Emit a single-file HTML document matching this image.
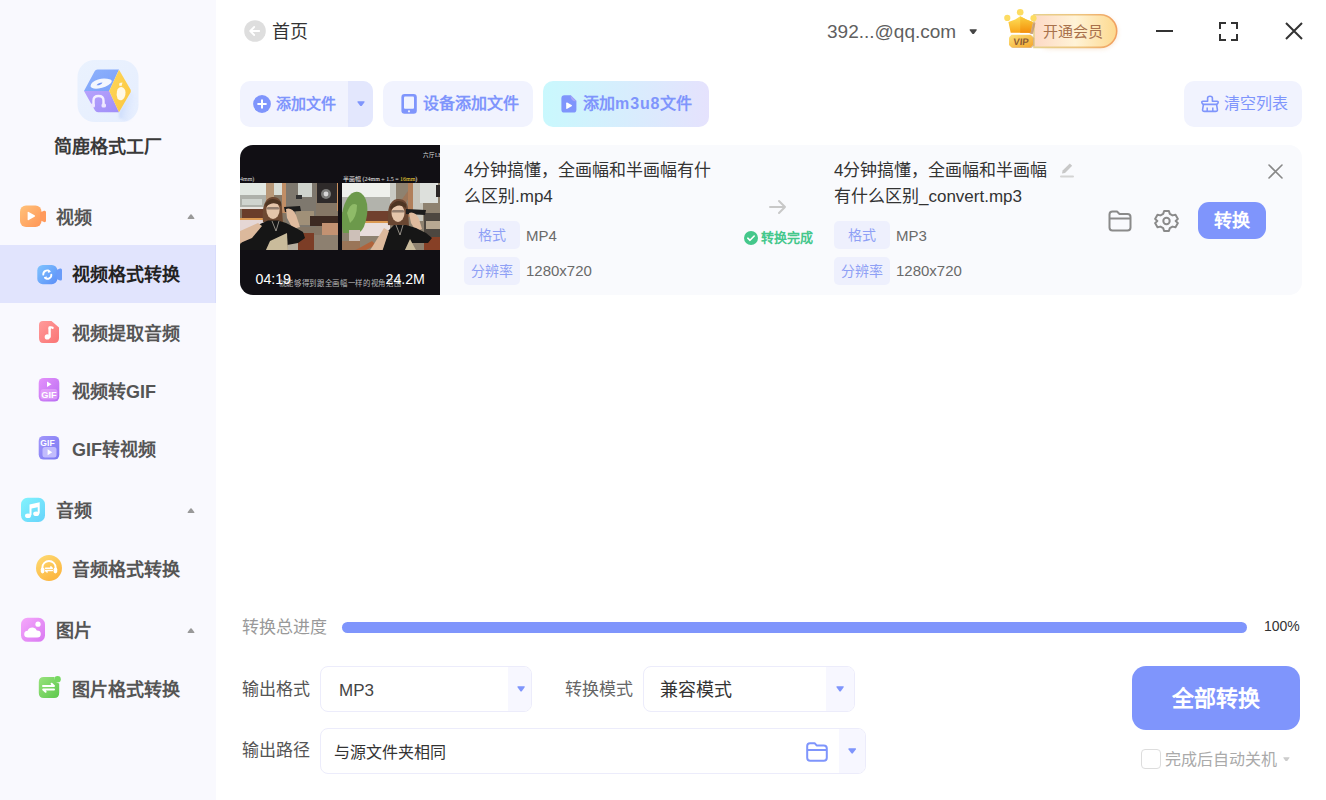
<!DOCTYPE html>
<html lang="zh-CN"><head><meta charset="utf-8">
<style>
*{margin:0;padding:0;box-sizing:border-box}
html,body{width:1326px;height:800px;overflow:hidden;background:#fff;font-family:"Liberation Sans",sans-serif;color:#333}
.a{position:absolute}
.t{position:absolute;white-space:nowrap;line-height:1}
#side{position:absolute;left:0;top:0;width:216px;height:800px;background:#f9f9fe}
.hdr{font-size:18px;font-weight:bold;color:#555}
.sub{font-size:18px;font-weight:bold;color:#555}
.caret{position:absolute;width:0;height:0;border-left:4px solid transparent;border-right:4px solid transparent;border-bottom:5px solid #999}
.btn{position:absolute;top:81px;height:46px;border-radius:10px;background:#f1f3fe}
.btxt{font-size:16px;font-weight:bold;color:#7f95fc}
.tag{position:absolute;width:56px;height:28px;border-radius:5px;background:#eef0fd;color:#8fa0f5;font-size:14px;line-height:28px;text-align:center}
.val{font-size:15px;color:#6a6a6a}
.sel{position:absolute;border:1px solid #ececfb;border-radius:8px;background:#fff;overflow:hidden}
.selr{position:absolute;right:0;top:0;bottom:0;width:23px;background:#f7f7ff}
.bcaret{position:absolute;width:0;height:0;border-left:4px solid transparent;border-right:4px solid transparent;border-top:5px solid #7f95fc}
</style></head><body>
<div id="side">
  <!-- logo -->
    <svg class="a" style="left:77px;top:60px" width="62" height="62" viewBox="0 0 62 62">
    <defs>
      <linearGradient id="lbg" x1="0" y1="0" x2="1" y2="1"><stop offset="0" stop-color="#eaf2fe"/><stop offset="1" stop-color="#e6eefe"/></linearGradient>
      <linearGradient id="lsh" x1="0" y1="0" x2="1" y2="0.3"><stop offset="0" stop-color="#a4bffa" stop-opacity="0.9"/><stop offset="1" stop-color="#e0ebfe" stop-opacity="0"/></linearGradient><filter id="lblur"><feGaussianBlur stdDeviation="1.2"/></filter>
      <linearGradient id="lbl" x1="0" y1="0" x2="1" y2="1"><stop offset="0" stop-color="#8eb2fc"/><stop offset="1" stop-color="#7aa0fa"/></linearGradient>
      <linearGradient id="lpu" x1="0" y1="0" x2="1" y2="1"><stop offset="0" stop-color="#b7a2fc"/><stop offset="1" stop-color="#a08ef8"/></linearGradient>
      <linearGradient id="lye" x1="0" y1="0" x2="1" y2="1"><stop offset="0" stop-color="#fdd65a"/><stop offset="1" stop-color="#fcc63e"/></linearGradient>
    </defs>
    <rect x="0.5" y="0" width="61" height="62" rx="17" fill="url(#lbg)"/>
    <path d="M42 52.3L53.8 31.5L61.5 40V52Q59 60 50 61.5L42 58Z" fill="url(#lsh)" opacity="0.7" filter="url(#lblur)"/>
    <path d="M17.5 11.5Q18.5 9.5 20.5 9.5H42L32.2 31H7Z" fill="url(#lbl)"/>
    <path d="M7 31H32.2L42 52.3H21Q19 52.3 18 50.5Z" fill="url(#lpu)"/>
    <path d="M42 9.8L53.5 29.5Q54.3 31 53.5 32.5L42 52.3L32.2 31Z" fill="url(#lye)"/>
    <path d="M13.5 26.3Q14 21.5 21 19.5Q27 17.5 33.5 19.5Q36 21 33.5 23.5Q29 27.5 21.5 28.5Q14.5 29.2 13.5 26.3Z" fill="#f3f6fe"/>
    <path d="M19.5 25.3Q21.5 22.5 25.5 22.5Q24 25.5 19.5 25.3Z" fill="#6f95f8"/>
    <path d="M16.5 45.5V40.5Q16.5 36 21.5 36Q26.5 36 26.5 40.5V45.5" fill="none" stroke="#f4efff" stroke-width="2.4"/>
    <rect x="13.5" y="43.5" width="4.5" height="4" rx="1.5" fill="#ede6ff"/>
    <rect x="24.5" y="43.5" width="4.5" height="4" rx="1.5" fill="#ede6ff"/>
    <path d="M44.5 27Q48.5 28 48.5 32.5Q48.5 38 45 40Q42 41 40.5 38.5Q39 35 40 31Q41 27 44.5 27Z" fill="#fff8e4"/>
    <path d="M42.5 23L45.5 22.5L44.5 26L42 25.5Z" fill="#fff8e4"/>
  </svg>
  <div class="t" style="left:54px;top:138px;font-size:18px;font-weight:bold;color:#3a3a3a">简鹿格式工厂</div>

  <!-- video section -->
  <svg class="a" style="left:19px;top:205px" width="28" height="23" viewBox="0 0 28 23">
    <defs><linearGradient id="gOr" x1="0" y1="0" x2="1" y2="1"><stop offset="0" stop-color="#ffc27a"/><stop offset="1" stop-color="#ff9556"/></linearGradient></defs>
    <rect x="1" y="0.6" width="21.5" height="21.5" rx="6" fill="url(#gOr)"/>
    <path d="M21 7.5L25 5.8Q27 5.2 27 7.2V15.6Q27 17.6 25 17L21 15.2Z" fill="#ff9a5c"/>
    <path d="M8.6 7.6Q8.6 6.4 9.7 7L15.6 10.3Q16.6 11 15.6 11.7L9.7 15Q8.6 15.6 8.6 14.4Z" fill="#fff"/>
  </svg>
  <div class="t hdr" style="left:56px;top:209px">视频</div>
  <svg class="a" style="left:187px;top:213.5px" width="8" height="5.2" viewBox="0 0 8 5.6"><path d="M1 5.3H7Q8.2 5.3 7.5 4.3L4.7 0.6Q4 -0.2 3.3 0.6L0.5 4.3Q-0.2 5.3 1 5.3Z" fill="#999"/></svg>

  <div class="a" style="left:0;top:245px;width:216px;height:58px;background:#e1e4fd;border-right:1px solid #d9ddfc"></div>
  <svg class="a" style="left:37px;top:264px" width="26" height="21" viewBox="0 0 26 21">
    <defs><linearGradient id="gBl" x1="0" y1="0" x2="1" y2="1"><stop offset="0" stop-color="#7fc4fe"/><stop offset="1" stop-color="#5b8ef8"/></linearGradient></defs>
    <rect x="0.3" y="1" width="20" height="19.2" rx="5.5" fill="url(#gBl)"/>
    <path d="M19.5 6L23 4.6Q25 4 25 6V15Q25 17 23 16.4L19.5 15Z" fill="#6a9cf9"/>
    <path d="M6.3 10.6A3.8 3.8 0 0 1 12.6 7.4M14.3 10.6A3.8 3.8 0 0 1 8 13.8" fill="none" stroke="#fff" stroke-width="1.9" stroke-linecap="round"/>
    <path d="M11.2 5.6L13.6 7.6L10.9 8.9Z M9.4 15.6L7 13.6L9.7 12.3Z" fill="#fff"/>
  </svg>
  <div class="t sub" style="left:72px;top:266px;color:#222">视频格式转换</div>

  <svg class="a" style="left:38px;top:320px" width="22" height="24" viewBox="0 0 22 24">
    <defs><linearGradient id="gRd" x1="0" y1="0" x2="1" y2="1"><stop offset="0" stop-color="#ff9b9b"/><stop offset="1" stop-color="#fa7474"/></linearGradient></defs>
    <path d="M5 1H13.5L21 7.6V18Q21 23 16 23H5Q1 23 1 18V5Q1 1 5 1Z" fill="url(#gRd)"/>
    <path d="M11.6 7.5V16.8" stroke="#fff" stroke-width="2.4" stroke-linecap="round"/>
    <circle cx="9.3" cy="16.9" r="2.6" fill="#fff"/>
    <path d="M11.6 8.6Q12.4 6.4 14.6 7.8" fill="none" stroke="#fff" stroke-width="2.2" stroke-linecap="round"/>
  </svg>
  <div class="t sub" style="left:72px;top:325px">视频提取音频</div>

  <svg class="a" style="left:38px;top:377px" width="22" height="25" viewBox="0 0 22 25">
    <defs><linearGradient id="gPu" x1="0" y1="0" x2="1" y2="1"><stop offset="0" stop-color="#e592fb"/><stop offset="1" stop-color="#b86cf2"/></linearGradient></defs>
    <rect x="0.7" y="0.9" width="20.6" height="23.7" rx="5" fill="url(#gPu)"/>
    <rect x="2.5" y="12" width="17" height="10.5" rx="3" fill="#ecb2fb" opacity="0.55"/>
    <path d="M9 4.5L13.5 7.2L9 9.9Z" fill="#fff"/>
    <text x="11" y="21.2" text-anchor="middle" font-family="Liberation Sans" font-weight="bold" font-size="9.2" fill="#fff">GIF</text>
  </svg>
  <div class="t sub" style="left:72px;top:383px">视频转GIF</div>

  <svg class="a" style="left:38px;top:435px" width="22" height="25" viewBox="0 0 22 25">
    <defs><linearGradient id="gVi" x1="0" y1="0" x2="1" y2="1"><stop offset="0" stop-color="#a397fb"/><stop offset="1" stop-color="#7a78f2"/></linearGradient></defs>
    <rect x="0.7" y="0.9" width="20.6" height="23.7" rx="5" fill="url(#gVi)"/>
    <text x="9.5" y="10.8" text-anchor="middle" font-family="Liberation Sans" font-weight="bold" font-size="8.6" fill="#fff">GIF</text>
    <rect x="4.5" y="12" width="14" height="10.5" rx="2.5" fill="#c2bcfd"/>
    <path d="M9.6 14.2L14.2 17.2L9.6 20.2Z" fill="#fff"/>
  </svg>
  <div class="t sub" style="left:72px;top:441px">GIF转视频</div>

  <!-- audio -->
  <svg class="a" style="left:21px;top:497px" width="25" height="26" viewBox="0 0 25 26">
    <defs><linearGradient id="gCy" x1="0" y1="0" x2="1" y2="1"><stop offset="0" stop-color="#82f3fd"/><stop offset="1" stop-color="#66d3fb"/></linearGradient></defs>
    <rect x="0" y="0.8" width="24" height="24.2" rx="6.5" fill="url(#gCy)"/>
    <path d="M9.5 18.3V8.4L17.7 6.6V16.4" fill="none" stroke="#fff" stroke-width="2"/>
    <path d="M9.5 8.4L17.7 6.6V10L9.5 11.8Z" fill="#fff"/>
    <ellipse cx="7" cy="18.8" rx="3" ry="2.3" fill="#fff"/>
    <ellipse cx="15.2" cy="16.8" rx="3" ry="2.3" fill="#fff"/>
  </svg>
  <div class="t hdr" style="left:56px;top:502px">音频</div>
  <svg class="a" style="left:187px;top:507.5px" width="8" height="5.2" viewBox="0 0 8 5.6"><path d="M1 5.3H7Q8.2 5.3 7.5 4.3L4.7 0.6Q4 -0.2 3.3 0.6L0.5 4.3Q-0.2 5.3 1 5.3Z" fill="#999"/></svg>
  <svg class="a" style="left:36px;top:555px" width="26" height="26" viewBox="0 0 26 26">
    <defs><linearGradient id="gYe" x1="0" y1="0" x2="0.6" y2="1"><stop offset="0" stop-color="#fedc75"/><stop offset="1" stop-color="#fcb640"/></linearGradient></defs>
    <circle cx="13" cy="13" r="13" fill="url(#gYe)"/>
    <path d="M6.4 15.2V12.6A6.6 6.6 0 0 1 19.6 12.6V15.2" fill="none" stroke="#fff" stroke-width="1.9"/>
    <rect x="4.8" y="12.4" width="3.6" height="6" rx="1.8" fill="#fff"/>
    <rect x="17.6" y="12.4" width="3.6" height="6" rx="1.8" fill="#fff"/>
    <path d="M9.5 13.3H16.3L14.8 11.9M16.3 15.6H9.6L11.1 17" fill="none" stroke="#fff" stroke-width="1.5" stroke-linecap="round" stroke-linejoin="round"/>
  </svg>
  <div class="t sub" style="left:72px;top:561px">音频格式转换</div>

  <!-- image -->
  <svg class="a" style="left:21px;top:617px" width="25" height="26" viewBox="0 0 25 26">
    <defs><linearGradient id="gPk" x1="0" y1="0" x2="1" y2="1"><stop offset="0" stop-color="#f5a8fb"/><stop offset="1" stop-color="#d978f2"/></linearGradient></defs>
    <rect x="0" y="0.8" width="24" height="24" rx="6.5" fill="url(#gPk)"/>
    <circle cx="17" cy="7.2" r="2.6" fill="#fff"/>
    <path d="M7 20.5Q3.2 20.5 3.2 17.2Q3.2 14 6.6 13.8Q8 10.2 12 10.6Q15 11 15.8 13.6Q19.8 13.6 19.8 17Q19.8 20.5 16.2 20.5Z" fill="#fff"/>
  </svg>
  <div class="t hdr" style="left:56px;top:622px">图片</div>
  <svg class="a" style="left:187px;top:627.5px" width="8" height="5.2" viewBox="0 0 8 5.6"><path d="M1 5.3H7Q8.2 5.3 7.5 4.3L4.7 0.6Q4 -0.2 3.3 0.6L0.5 4.3Q-0.2 5.3 1 5.3Z" fill="#999"/></svg>
  <svg class="a" style="left:38px;top:675px" width="25" height="24" viewBox="0 0 25 24">
    <defs><linearGradient id="gGr" x1="0" y1="0" x2="1" y2="1"><stop offset="0" stop-color="#99e27d"/><stop offset="1" stop-color="#5cc84c"/></linearGradient></defs>
    <path d="M5.8 2H16.5A5.5 5.5 0 0 0 21.2 8.4V17.8Q21.2 23 16.2 23H5.8Q0.8 23 0.8 18V7Q0.8 2 5.8 2Z" fill="url(#gGr)"/>
    <circle cx="19.6" cy="4.2" r="3.2" fill="#76d861"/>
    <path d="M5 11H16L13.6 8.8M16 14.6H5.2L7.6 16.8" fill="none" stroke="#fff" stroke-width="2" stroke-linecap="round" stroke-linejoin="round"/>
  </svg>
  <div class="t sub" style="left:72px;top:681px">图片格式转换</div>
</div>

<!-- top bar -->
<svg class="a" style="left:244px;top:20px" width="22" height="22" viewBox="0 0 22 22">
  <circle cx="11" cy="11" r="10.8" fill="#dedede"/>
  <path d="M15.2 11H6.4M10.2 7L6.2 11L10.2 15" fill="none" stroke="#fff" stroke-width="1.8" stroke-linecap="round" stroke-linejoin="round"/>
</svg>
<div class="t" style="left:272px;top:23px;font-size:18px;color:#333">首页</div>
<div class="t" style="left:827px;top:22px;font-size:19px;color:#5f5f5f">392...@qq.com</div>
<svg class="a" style="left:968.5px;top:28.5px" width="8.4" height="5.6" viewBox="0 0 8 5.6"><path d="M1 0.3H7Q8.2 0.3 7.5 1.3L4.7 5Q4 5.8 3.3 5L0.5 1.3Q-0.2 0.3 1 0.3Z" fill="#444"/></svg>

<!-- VIP -->
<svg class="a" style="left:1000px;top:5px" width="125" height="50" viewBox="0 0 125 50">
  <defs>
    <linearGradient id="vpill" x1="0" y1="0" x2="1" y2="0"><stop offset="0" stop-color="#fdd9c6"/><stop offset="0.5" stop-color="#fff3d6"/><stop offset="1" stop-color="#fdd98e"/></linearGradient>
    <linearGradient id="vbord" x1="0" y1="0" x2="1" y2="0"><stop offset="0" stop-color="#e6d28e"/><stop offset="0.6" stop-color="#eec27c"/><stop offset="1" stop-color="#f1a060"/></linearGradient>
    <linearGradient id="vcr" x1="0" y1="0" x2="0" y2="1"><stop offset="0" stop-color="#fde15c"/><stop offset="1" stop-color="#f9a61a"/></linearGradient>
    <linearGradient id="vcr2" x1="0" y1="0" x2="0" y2="1"><stop offset="0" stop-color="#fbd03e"/><stop offset="1" stop-color="#f48f0c"/></linearGradient>
    <linearGradient id="vpl" x1="0" y1="0" x2="1" y2="1"><stop offset="0" stop-color="#fde27a"/><stop offset="1" stop-color="#f4a52c"/></linearGradient>
    <filter id="vsh" x="-20%" y="-40%" width="140%" height="180%"><feGaussianBlur stdDeviation="2"/></filter>
  </defs>
  <rect x="34" y="10.5" width="84" height="34" rx="17" fill="#f0c9a0" opacity="0.35" filter="url(#vsh)"/>
  <path d="M34 9.8H100.4A16.3 16.3 0 0 1 100.4 42.4H34Z" fill="url(#vpill)" stroke="url(#vbord)" stroke-width="1.6"/>
  <path d="M12 19L17 16L22.5 13L28 16L35 19L33 29H31Z" fill="#b88a62" opacity="0.6"/>
  <path d="M8.4 16.9L15.2 14.6L20.2 11.2L26.4 14.6L32.9 16.9L30.4 27.8H10.7Z" fill="url(#vcr)"/>
  <path d="M20.2 11.2L26.4 14.6L32.9 16.9L30.4 27.8H20.2Z" fill="url(#vcr2)"/>
  <path d="M33.5 17L35.5 18L32.5 29L30.4 28.5Z" fill="#c49870" opacity="0.7"/>
  <circle cx="7.3" cy="12.9" r="3.1" fill="#fddc62"/>
  <circle cx="20.2" cy="7.3" r="3.3" fill="#fddc62"/>
  <circle cx="33.5" cy="13.2" r="3.1" fill="#fddc62"/>
  <path d="M11.5 29.8H30.5L33 32.5V40L30.5 42.5H11.5L9 40V32.5Z" fill="#c49a74" opacity="0.6" transform="translate(1.2,0.6)"/>
  <path d="M11.5 29.8H30.5L33 32.5V40L30.5 42.5H11.5L9 40V32.5Z" fill="url(#vpl)" transform="translate(0,0)"/>
  <text x="21" y="40.2" text-anchor="middle" font-family="Liberation Sans" font-weight="bold" font-size="9.5" fill="#8a5a34" transform="skewX(-6) translate(4,0)">VIP</text>
</svg>
<div class="t" style="left:1043px;top:24px;font-size:15px;color:#a8714c">开通会员</div>
<!-- window controls -->
<div class="a" style="left:1156px;top:30px;width:17px;height:2px;background:#333"></div>
<svg class="a" style="left:1219px;top:22px" width="19" height="19" viewBox="0 0 19 19" fill="none" stroke="#333" stroke-width="2">
  <path d="M1 7V1h6M12 1h6v6M18 12v6h-6M7 18H1v-6"/>
</svg>
<svg class="a" style="left:1285px;top:22px" width="18" height="18" viewBox="0 0 18 18" fill="none" stroke="#333" stroke-width="2">
  <path d="M1 1L17 17M17 1L1 17"/>
</svg>

<!-- toolbar -->
<div class="btn" style="left:240px;width:133px;overflow:hidden">
  <div class="a" style="right:0;top:0;width:25px;height:46px;background:#e3e7fd"></div>
</div>
<svg class="a" style="left:253px;top:95px" width="18" height="18" viewBox="0 0 18 18">
  <circle cx="9" cy="9" r="8.9" fill="#7f95fc"/>
  <path d="M9 4.4V13.6M4.4 9H13.6" stroke="#fff" stroke-width="2"/>
</svg>
<div class="t btxt" style="left:276px;top:96px;font-size:15px">添加文件</div>
<svg class="a" style="left:356.6px;top:100.6px" width="8" height="5.6" viewBox="0 0 8 5.6"><path d="M1 0.3H7Q8.2 0.3 7.5 1.3L4.7 5Q4 5.8 3.3 5L0.5 1.3Q-0.2 0.3 1 0.3Z" fill="#7f95fc"/></svg>

<div class="btn" style="left:383px;width:150px"></div>
<svg class="a" style="left:401px;top:94px" width="16" height="20" viewBox="0 0 16 20">
  <rect x="0.4" y="0" width="15.4" height="19.8" rx="3.2" fill="#7f95fc"/>
  <rect x="3" y="2.4" width="10" height="12.4" rx="1" fill="#f1f3fe"/>
  <circle cx="8" cy="17.3" r="1.1" fill="#f1f3fe"/>
</svg>
<div class="t btxt" style="left:423px;top:96px">设备添加文件</div>

<div class="btn" style="left:543px;width:166px;background:linear-gradient(90deg,#c9f8fd,#e5e2fd)"></div>
<svg class="a" style="left:561px;top:95px" width="16" height="18" viewBox="0 0 16 18">
  <path d="M3.4 0.2H9.8L15.4 5.8V14.4Q15.4 17.6 12.2 17.6H3.4Q0.4 17.6 0.4 14.4V3.4Q0.4 0.2 3.4 0.2Z" fill="#7f95fc"/>
  <path d="M9.4 0.2L15.4 6.2Q10 6.8 9.4 0.2Z" fill="#aaa6f8"/>
  <path d="M5.2 8.2Q5.2 7.1 6.2 7.6L10.6 10.1Q11.5 10.7 10.6 11.3L6.2 13.8Q5.2 14.3 5.2 13.2Z" fill="#fff"/>
</svg>
<div class="t btxt" style="left:583px;top:96px">添加<span style="letter-spacing:0.9px">m3u8</span>文件</div>

<div class="btn" style="left:1184px;width:118px"></div>
<svg class="a" style="left:1201px;top:95px" width="18" height="18" viewBox="0 0 18 18" fill="none" stroke="#7f95fc" stroke-width="1.6" stroke-linejoin="round">
  <path d="M6.6 6.2V3Q6.6 1.2 9 1.2Q11.4 1.2 11.4 3V6.2H16Q17.6 6.2 17 8Q16.6 9.4 15 9.4H3Q1.4 9.4 1 8Q0.4 6.2 2 6.2Z"/>
  <path d="M2.4 9.6L1.6 14.6Q1.4 16.4 3.4 16.4H14.6Q16.6 16.4 16.4 14.6L15.6 9.6"/>
  <path d="M6.2 12.6V16.2M11.8 12.6V16.2" stroke-width="1.5"/>
</svg>
<div class="t btxt" style="left:1224px;top:96px;font-weight:normal">清空列表</div>

<!-- card -->
<div class="a" style="left:240px;top:145px;width:1062px;height:150px;border-radius:13px;background:#f9fafd;overflow:hidden">
  <svg class="a" style="left:0;top:0" width="200" height="150" viewBox="0 0 200 150">
    <rect width="200" height="150" fill="#110f14"/>
    <!-- left photo -->
    <defs>
      <filter id="pb" x="-5%" y="-5%" width="110%" height="110%"><feGaussianBlur stdDeviation="0.6"/></filter>
      <clipPath id="cl"><rect width="98" height="67"/></clipPath>
    </defs>
    <g transform="translate(0,38)" clip-path="url(#cl)"><g filter="url(#pb)">
      <rect x="-2" y="-2" width="102" height="71" fill="#857766"/>
      <rect x="-2" y="-2" width="30" height="14" fill="#e2e8e2"/>
      <rect x="-2" y="12" width="28" height="12" fill="#aeb1aa"/>
      <rect x="2" y="16" width="20" height="6" fill="#cfd4ce"/>
      <rect x="26" y="-2" width="8" height="40" fill="#b89878"/>
      <rect x="34" y="-2" width="10" height="14" fill="#d9ddd6"/>
      <rect x="42" y="0" width="4" height="30" fill="#c08e66"/>
      <rect x="46" y="-2" width="30" height="46" fill="#7e786e"/>
      <rect x="58" y="0" width="14" height="14" fill="#cfd3cd"/>
      <rect x="56" y="12" width="6" height="4" fill="#333"/>
      <rect x="77" y="-1" width="20" height="21" fill="#2f2c2a"/>
      <circle cx="86" cy="11" r="5" fill="#7c7c7a"/>
      <circle cx="86" cy="11" r="2.4" fill="#d8d8d8"/>
      <rect x="97" y="-2" width="3" height="30" fill="#c9905e"/>
      <rect x="-2" y="24" width="26" height="2" fill="#e8e4df"/>
      <rect x="2" y="26" width="21" height="9" fill="#6b3d2c"/>
      <rect x="-2" y="35" width="28" height="2.4" fill="#dc9a52"/>
      <rect x="-2" y="37" width="27" height="13" fill="#e5d7d5"/>
      <rect x="56" y="28" width="18" height="14" fill="#a09078"/>
      <rect x="70" y="33" width="30" height="10" fill="#3c2a20"/>
      <rect x="82" y="40" width="16" height="15" fill="#c39272"/>
      <rect x="74" y="52" width="26" height="17" fill="#8d8070"/>
      <rect x="58" y="50" width="16" height="19" fill="#7c3e26"/>
      <rect x="48" y="54" width="10" height="15" fill="#b6ae9e"/>
      <path d="M23 39Q21 16 32 14Q42 13 42 26L43 40Z" fill="#6e4a32"/>
      <ellipse cx="33" cy="27" rx="6.6" ry="9" fill="#e4c5aa"/>
      <path d="M25 21Q31 12 41 19L41 23Q33 17 26 24Z" fill="#4e3424"/>
      <rect x="27" y="24" width="12" height="2.6" rx="1.2" fill="#5e5048" opacity="0.6"/>
      <path d="M44 24L60 23L61 28L45 29Z" fill="#1c1b1a"/>
      <path d="M46 26Q52 24 56 32L60 44L53 46L47 35Z" fill="#dfbb9e"/>
      <path d="M-2 64L10 50L20 41L28 37.5H38L46 40L56 45L63 49L65 55L58 60L47 62L44 69H-2Z" fill="#141414"/>
      <path d="M-2 49L18 40L22 43L12 55L-2 61Z" fill="#dcb99c"/>
      <path d="M25 69L30 58L47 50L48 69Z" fill="#c9bb9b"/>
      <path d="M32 38L36 48L39 38" fill="none" stroke="#c8c2b6" stroke-width="0.7"/>
    </g></g>
    <!-- right photo -->
    <g transform="translate(102,38)" clip-path="url(#cl)"><g filter="url(#pb)">
      <rect x="-2" y="-2" width="102" height="71" fill="#8e8270"/>
      <rect x="-2" y="-2" width="52" height="16" fill="#eef0ec"/>
      <rect x="-2" y="14" width="50" height="15" fill="#b2b3ac"/>
      <rect x="48" y="-2" width="6" height="30" fill="#c9cac3"/>
      <path d="M50 30L66 8L70 10L56 32Z" fill="#9c7458"/>
      <rect x="66" y="-2" width="5" height="36" fill="#b17f5a"/>
      <rect x="71" y="-2" width="10" height="40" fill="#c8c6bc"/>
      <rect x="78" y="-2" width="18" height="22" fill="#dde0dc"/>
      <rect x="94" y="2" width="6" height="12" fill="#2a2826"/>
      <rect x="22" y="28" width="25" height="10" fill="#70402e"/>
      <rect x="18" y="38" width="32" height="2.4" fill="#dc9a52"/>
      <rect x="18" y="40" width="30" height="13" fill="#e9dedc"/>
      <path d="M1 50Q-3 30 5 16Q11 6 19 10Q27 16 25 32Q23 46 17 50Z" fill="#6c994c"/>
      <path d="M5 30Q9 18 15 22Q15 34 8 40Z" fill="#8fbb68"/>
      <rect x="7" y="47" width="11" height="15" fill="#cdc0b8"/>
      <rect x="-2" y="58" width="20" height="11" fill="#9a7458"/>
      <path d="M10 69L30 58L34 62L20 69Z" fill="#b0643a"/>
      <rect x="82" y="30" width="18" height="26" fill="#4d4640"/>
      <rect x="84" y="38" width="14" height="8" fill="#b8a892"/>
      <rect x="82" y="54" width="18" height="15" fill="#874126"/>
      <path d="M46 42Q44 18 55 16Q66 15 66 28L67 44Z" fill="#6a4632"/>
      <ellipse cx="56" cy="30" rx="6.5" ry="9" fill="#e5c6ab"/>
      <path d="M48 24Q55 14 64 21L64 25Q56 19 49 27Z" fill="#4e3424"/>
      <rect x="50" y="27" width="12" height="2.6" rx="1.2" fill="#5e5048" opacity="0.6"/>
      <path d="M64 26L84 27L83 32L64 31Z" fill="#1c1b1a"/>
      <path d="M67 30Q73 28 77 36L80 46L74 48L69 40Z" fill="#dfbb9e"/>
      <path d="M38 69L44 50L52 42H64L74 45L84 50L90 55L86 60L70 60L66 69Z" fill="#141414"/>
      <path d="M27 69L42 45L47 48L40 69Z" fill="#dcb99c"/>
      <path d="M62 69L68 56L75 69Z" fill="#c9bb9b"/>
      <path d="M54 42L58 52L61 42" fill="none" stroke="#c8c2b6" stroke-width="0.7"/>
    </g></g>
    <text x="0" y="36" font-size="6" fill="#ddd" font-family="Liberation Serif">4mm)</text>
    <text x="103" y="36" font-size="6" fill="#eee" font-family="Liberation Serif">半画幅 (24mm ÷ 1.5 = <tspan fill="#f3d23a">16mm</tspan>)</text>
    <text x="183" y="12" font-size="5.5" fill="#ddd" font-family="Liberation Serif">六厅LEI</text>
    <text x="38.5" y="141" font-size="7.7" fill="#b8b8b8" textLength="123" lengthAdjust="spacingAndGlyphs">就能够得到跟全画幅一样的视角范围</text>
    <text x="15.5" y="138.6" font-size="14.2" fill="#fff" font-family="Liberation Sans">04:19</text>
    <text x="145.5" y="138.6" font-size="14.2" fill="#fff" font-family="Liberation Sans">24.2M</text>
  </svg>
</div>

<div class="t" style="left:464px;top:158px;font-size:17px;line-height:26px;color:#333">4分钟搞懂，全画幅和半画幅有什<br>么区别.mp4</div>
<div class="tag" style="left:464px;top:221px">格式</div>
<div class="t val" style="left:526px;top:228px">MP4</div>
<div class="tag" style="left:464px;top:257px">分辨率</div>
<div class="t val" style="left:526px;top:263px">1280x720</div>

<div class="t" style="left:834px;top:158px;font-size:17px;line-height:26px;color:#333">4分钟搞懂，全画幅和半画幅<br>有什么区别_convert.mp3</div>
<div class="tag" style="left:834px;top:221px">格式</div>
<div class="t val" style="left:896px;top:228px">MP3</div>
<div class="tag" style="left:834px;top:257px">分辨率</div>
<div class="t val" style="left:896px;top:263px">1280x720</div>


<!-- card middle/right -->
<svg class="a" style="left:768px;top:199px" width="20" height="16" viewBox="0 0 20 16" fill="none" stroke="#c8c8c8" stroke-width="2" stroke-linecap="round" stroke-linejoin="round">
  <path d="M2 8H17M11 2L17 8L11 14"/>
</svg>
<svg class="a" style="left:744px;top:231px" width="14" height="14" viewBox="0 0 14 14">
  <circle cx="7" cy="7" r="7" fill="#44c78b"/>
  <path d="M3.8 7.2L6 9.3L10.2 5" fill="none" stroke="#fff" stroke-width="1.6" stroke-linecap="round" stroke-linejoin="round"/>
</svg>
<div class="t" style="left:761px;top:231px;font-size:13px;font-weight:bold;color:#44c78b">转换完成</div>
<svg class="a" style="left:1059px;top:161px" width="16" height="17" viewBox="0 0 16 17">
  <path d="M3 12.5L3.6 9.6L10.8 2.4L13.2 4.8L6 12Z" fill="#c8c8c8"/>
  <rect x="1" y="14.6" width="14" height="2" rx="1" fill="#d4d4d4"/>
</svg>
<svg class="a" style="left:1268px;top:164px" width="15" height="15" viewBox="0 0 15 15" fill="none" stroke="#888" stroke-width="1.6" stroke-linecap="round">
  <path d="M1 1L14 14M14 1L1 14"/>
</svg>
<svg class="a" style="left:1108px;top:210px" width="24" height="22" viewBox="0 0 24 22" fill="none" stroke="#8a8a8a" stroke-width="2" stroke-linejoin="round">
  <path d="M1.5 4.5Q1.5 1.5 4.5 1.5H9L11.5 4H19.5Q22.5 4 22.5 7V17.5Q22.5 20.5 19.5 20.5H4.5Q1.5 20.5 1.5 17.5Z"/>
  <path d="M1.5 8.5H22.5"/>
</svg>
<svg class="a" style="left:1154px;top:209px" width="25" height="24" viewBox="0 0 24 24" fill="none" stroke="#8a8a8a" stroke-width="2" stroke-linejoin="round">
  <path d="M9.6 2H14.4L15.3 4.9L18 6.4L21 5.7L23.4 9.9L21.2 12L23.4 14.1L21 18.3L18 17.6L15.3 19.1L14.4 22H9.6L8.7 19.1L6 17.6L3 18.3L0.6 14.1L2.8 12L0.6 9.9L3 5.7L6 6.4L8.7 4.9Z"/>
  <circle cx="12" cy="12" r="3.2"/>
</svg>
<div class="a" style="left:1198px;top:202px;width:68px;height:37px;border-radius:11px;background:#7f95fc"></div>
<div class="t" style="left:1214px;top:212px;font-size:18px;font-weight:bold;color:#fff">转换</div>

<!-- bottom -->
<div class="t" style="left:242px;top:619px;font-size:17px;color:#999">转换总进度</div>
<div class="a" style="left:342px;top:622px;width:905px;height:11px;border-radius:6px;background:#7f95fc"></div>
<div class="t" style="left:1264px;top:619px;font-size:14px;color:#333">100%</div>

<div class="t" style="left:242px;top:681px;font-size:17px;color:#555">输出格式</div>
<div class="sel" style="left:320px;top:666px;width:212px;height:46px"><div class="selr"></div></div>
<div class="t" style="left:339px;top:682px;font-size:17px;color:#444">MP3</div>
<svg class="a" style="left:516.6px;top:686px" width="8.2" height="5.8" viewBox="0 0 8 5.6"><path d="M1 0.3H7Q8.2 0.3 7.5 1.3L4.7 5Q4 5.8 3.3 5L0.5 1.3Q-0.2 0.3 1 0.3Z" fill="#7f95fc"/></svg>

<div class="t" style="left:565px;top:681px;font-size:17px;color:#666">转换模式</div>
<div class="sel" style="left:643px;top:666px;width:212px;height:46px"><div class="selr" style="width:28px"></div></div>
<div class="t" style="left:660px;top:681px;font-size:18px;color:#333">兼容模式</div>
<svg class="a" style="left:836px;top:686px" width="8.2" height="5.8" viewBox="0 0 8 5.6"><path d="M1 0.3H7Q8.2 0.3 7.5 1.3L4.7 5Q4 5.8 3.3 5L0.5 1.3Q-0.2 0.3 1 0.3Z" fill="#7f95fc"/></svg>

<div class="t" style="left:242px;top:742px;font-size:17px;color:#555">输出路径</div>
<div class="sel" style="left:320px;top:728px;width:546px;height:46px"><div class="selr" style="width:26px"></div></div>
<div class="t" style="left:334px;top:745px;font-size:16px;color:#333">与源文件夹相同</div>
<svg class="a" style="left:806px;top:742px" width="22" height="20" viewBox="0 0 22 20" fill="none" stroke="#7f95fc" stroke-width="2" stroke-linejoin="round">
  <path d="M1.2 4Q1.2 1.2 4 1.2H8.6L10.6 3.4H17.8Q20.8 3.4 20.8 6.4V15.8Q20.8 18.8 17.8 18.8H4.2Q1.2 18.8 1.2 15.8Z"/>
  <path d="M1.2 8H20.8"/>
</svg>
<svg class="a" style="left:847.8px;top:747.8px" width="8.3" height="5.9" viewBox="0 0 8 5.6"><path d="M1 0.3H7Q8.2 0.3 7.5 1.3L4.7 5Q4 5.8 3.3 5L0.5 1.3Q-0.2 0.3 1 0.3Z" fill="#7f95fc"/></svg>

<div class="a" style="left:1132px;top:666px;width:168px;height:64px;border-radius:14px;background:#7f95fc"></div>
<div class="t" style="left:1172px;top:688px;font-size:22px;font-weight:bold;color:#fff">全部转换</div>
<div class="a" style="left:1141px;top:749px;width:20px;height:20px;border-radius:4px;border:1px solid #ddd;background:#fff"></div>
<div class="t" style="left:1165px;top:752px;font-size:16px;color:#aaa">完成后自动关机</div>
<svg class="a" style="left:1282.8px;top:756.5px" width="6.8" height="4.8" viewBox="0 0 8 5.6"><path d="M1 0.3H7Q8.2 0.3 7.5 1.3L4.7 5Q4 5.8 3.3 5L0.5 1.3Q-0.2 0.3 1 0.3Z" fill="#ccc"/></svg>
</body></html>
